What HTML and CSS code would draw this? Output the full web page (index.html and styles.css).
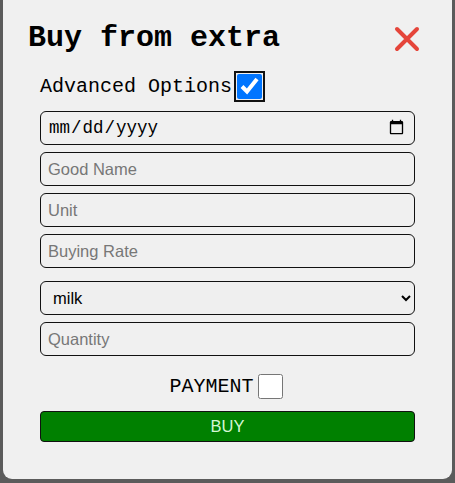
FILE: index.html
```html
<!DOCTYPE html>
<html>
<head>
<meta charset="utf-8">
<link rel="stylesheet" href="styles.css">
</head>
<body>
<div class="panel">
  <div class="header">
    <h2 class="title">Buy from extra</h2>
    <button class="close" aria-label="close">
      <svg width="26" height="26" viewBox="0 0 26 26"><path d="M3 3 L23 23 M23 3 L3 23" stroke="#e5453a" stroke-width="4" stroke-linecap="round" fill="none"/></svg>
    </button>
  </div>
  <form class="form">
    <label class="adv">Advanced Options<input type="checkbox" class="adv-check" checked></label>
    <input type="date" class="field date">
    <input type="text" class="field" placeholder="Good Name">
    <input type="text" class="field" placeholder="Unit">
    <input type="text" class="field" placeholder="Buying Rate">
    <select class="field select"><option>milk</option></select>
    <input type="text" class="field" placeholder="Quantity">
    <label class="pay">PAYMENT <input type="checkbox" class="pay-check"></label>
    <button type="button" class="buy">BUY</button>
  </form>
</div>
</body>
</html>
```

FILE: styles.css
```css
html, body {
  margin: 0;
  padding: 0;
  background: #5b5b5b;
  height: 100%;
  overflow: hidden;
}
.panel {
  margin: -20px 3px 0 3px;
  height: 499px;
  box-sizing: border-box;
  padding-top: 41px;
  background: #f0f0f0;
  border-radius: 9px;
}
.header {
  display: flex;
  align-items: center;
  justify-content: space-between;
  padding: 0 32px 0 25px;
  height: 34px;
}
.title {
  margin: 0;
  font-family: "Liberation Mono", monospace;
  font-weight: bold;
  font-size: 30px;
  line-height: 34px;
  color: #000;
}
.close {
  border: 0;
  background: none;
  padding: 0;
  width: 26px;
  height: 26px;
  margin-top: 1px;
  display: block;
}
.close svg { display: block; }
.form {
  display: flex;
  flex-direction: column;
  padding: 0 37px;
  margin-top: 15px;
}
.adv {
  display: flex;
  align-items: center;
  height: 32px;
  font-family: "Liberation Mono", monospace;
  font-size: 20px;
  color: #000;
}
.adv-check {
  width: 25px;
  height: 25px;
  margin: 0 0 0 5px;
  outline: 2px solid #111;
  outline-offset: 1px;
  border-radius: 4px;
}
.field {
  box-sizing: border-box;
  width: 375px;
  height: 34px;
  margin: 0 0 7px 0;
  border: 1px solid #111;
  border-radius: 6px;
  background: #f0f0f0;
  font-family: "Liberation Sans", Arial, sans-serif;
  font-size: 16.5px;
  padding: 0 7px;
  color: #000;
}
.field::placeholder { color: #777; }
.date {
  margin-top: 9px;
  font-family: "Liberation Mono", monospace;
  font-size: 17.5px;
}
.select {
  margin-top: 6px;
  background: #efefef;
  padding: 0 8px;
}
.pay {
  display: flex;
  align-items: center;
  justify-content: center;
  margin-top: 6px;
  height: 34px;
  font-family: "Liberation Mono", monospace;
  font-size: 20px;
  color: #000;
}
.pay-check {
  width: 25px;
  height: 25px;
  margin: 0 3px 0 4px;
}
.buy {
  margin-top: 8px;
  width: 375px;
  height: 31px;
  box-sizing: border-box;
  background: #008000;
  border: 1px solid #111;
  border-radius: 4px;
  color: #d4f7d4;
  font-family: "Liberation Sans", Arial, sans-serif;
  font-size: 16.5px;
}
```
